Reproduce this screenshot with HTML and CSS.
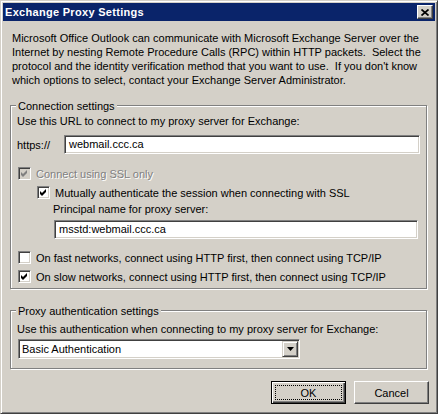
FILE: index.html
```html
<!DOCTYPE html>
<html>
<head>
    <title>Exchange Proxy Settings</title>
    <meta name="viewport" content="width=device-width, initial-scale=1">
    <link rel="stylesheet" href="styles.css">
</head>
<body>
<div class="window">
    <div class="titlebar">
        <span class="title">Exchange Proxy Settings</span>
        <span class="close-btn">
            <svg width="8" height="7" viewBox="0 0 8 7"><path d="M0.5 0.5L7.5 6.5M7.5 0.5L0.5 6.5" stroke="#000" stroke-width="1.7"/></svg>
        </span>
    </div>

    <div class="body">
        <p class="intro">Microsoft Office Outlook can communicate with Microsoft Exchange Server over the<br>Internet by nesting Remote Procedure Calls (RPC) within HTTP packets.&nbsp; Select the<br>protocol and the identity verification method that you want to use.&nbsp; If you don't know<br>which options to select, contact your Exchange Server Administrator.</p>

        <!-- connection -->
        <div class="group group-conn">
            <span class="legend">Connection settings</span>
            <div class="line">Use this URL to connect to my proxy server for Exchange:</div>
            <div class="url-row">
                <span class="prefix">https://</span>
                <div class="field">webmail.ccc.ca</div>
            </div>
            <div class="check disabled">
                <span class="box"><svg width="7" height="7" viewBox="0 0 7 7"><path d="M0 2L2 4L6 0V3L2 7L0 5Z"/></svg></span>
                Connect using SSL only
            </div>
            <div class="sub">
                <div class="check">
                    <span class="box"><svg width="7" height="7" viewBox="0 0 7 7"><path d="M0 2L2 4L6 0V3L2 7L0 5Z"/></svg></span>
                    Mutually authenticate the session when connecting with SSL
                </div>
                <div class="sub2">
                    <div class="line">Principal name for proxy server:</div>
                    <div class="field field-principal">msstd:webmail.ccc.ca</div>
                </div>
            </div>
            <div class="check check-fast">
                <span class="box"></span>
                On fast networks, connect using HTTP first, then connect using TCP/IP
            </div>
            <div class="check">
                <span class="box"><svg width="7" height="7" viewBox="0 0 7 7"><path d="M0 2L2 4L6 0V3L2 7L0 5Z"/></svg></span>
                On slow networks, connect using HTTP first, then connect using TCP/IP
            </div>
        </div>

        <!-- authentication -->
        <div class="group group-auth">
            <span class="legend">Proxy authentication settings</span>
            <div class="line">Use this authentication when connecting to my proxy server for Exchange:</div>
            <div class="combo">
                <span class="combo-text">Basic Authentication</span>
                <span class="combo-btn"><svg width="7" height="4" viewBox="0 0 7 4"><path d="M0 0H7L3.5 4Z"/></svg></span>
            </div>
        </div>

        <div class="buttons">
            <div class="btn btn-default"><span class="focus">OK</span></div>
            <div class="btn">Cancel</div>
        </div>
    </div>
</div>
</body>
</html>
```

FILE: styles.css
```css
body {
    margin: 0;
    font-family: "Liberation Sans", Arial, sans-serif;
    font-size: 11px;
    color: #000;
    background: #d4d0c8;
}

.window {
    width: 438px;
    height: 414px;
    box-sizing: border-box;
    background: #d4d0c8;
    border: 1px solid;
    border-color: #d4d0c8 #404040 #404040 #d4d0c8;
    box-shadow: inset 1px 1px 0 #fff, inset -1px -1px 0 #808080;
    padding: 2px;
    display: flex;
    flex-direction: column;
}

.titlebar {
    height: 18px;
    background: #0a246a;
    display: flex;
    align-items: center;
    padding-left: 2px;
}

.title {
    color: #fff;
    font-weight: bold;
    font-size: 11px;
    letter-spacing: 0.3px;
}

.close-btn {
    margin-left: auto;
    margin-right: 2px;
    width: 16px;
    height: 14px;
    box-sizing: border-box;
    background: #d4d0c8;
    border: 1px solid;
    border-color: #fff #404040 #404040 #fff;
    box-shadow: inset -1px -1px 0 #808080;
    display: flex;
    align-items: center;
    justify-content: center;
}

.body {
    padding: 0 8px 0 7px;
}

.intro {
    margin: 10px 0 0 2px;
    line-height: 14px;
}

.group {
    position: relative;
    border: 1px solid #808080;
    box-shadow: 1px 1px 0 #fff, inset 1px 1px 0 #fff;
    padding: 0 6px;
}

.legend {
    position: absolute;
    top: -7px;
    left: 5px;
    padding: 0 2px;
    line-height: 14px;
    background: #d4d0c8;
}

.line {
    line-height: 14px;
    white-space: nowrap;
}

.group-conn {
    margin-top: 18px;
    padding-top: 8px;
    padding-bottom: 2px;
}

.url-row {
    display: flex;
    align-items: center;
    margin-top: 7px;
}

.prefix {
    width: 47px;
}

.field {
    flex: 1;
    height: 19px;
    box-sizing: border-box;
    background: #fff;
    border: 1px solid;
    border-color: #808080 #fff #fff #808080;
    box-shadow: inset 1px 1px 0 #404040, inset -1px -1px 0 #d4d0c8;
    padding-left: 4px;
    line-height: 17px;
}

.field-principal {
    margin: 4px 2px 0 1px;
}

.check {
    height: 19px;
    display: flex;
    align-items: center;
    white-space: nowrap;
}

.url-row + .check {
    margin-top: 10px;
}

.box {
    width: 13px;
    height: 13px;
    box-sizing: border-box;
    margin: 0 5px 0 1px;
    background: #fff;
    border: 1px solid;
    border-color: #808080 #fff #fff #808080;
    box-shadow: inset 1px 1px 0 #404040, inset -1px -1px 0 #d4d0c8;
    display: flex;
    align-items: center;
    justify-content: center;
}

.box svg {
    fill: #000;
}

.disabled {
    color: #808080;
    text-shadow: 1px 1px 0 #fff;
}

.disabled .box {
    background: #d4d0c8;
}

.disabled .box svg {
    fill: #808080;
}

.sub {
    padding-left: 19px;
}

.sub2 {
    padding-left: 17px;
}

.check-fast {
    margin-top: 9px;
}

.group-auth {
    margin-top: 21px;
    padding-top: 11px;
    padding-bottom: 9px;
}

.combo {
    margin: 3px 0 0 1px;
    width: 282px;
    height: 20px;
    box-sizing: border-box;
    background: #fff;
    border: 1px solid;
    border-color: #808080 #fff #fff #808080;
    box-shadow: inset 1px 1px 0 #404040, inset -1px -1px 0 #d4d0c8;
    display: flex;
    align-items: center;
    padding: 0 1px 0 3px;
}

.combo-text {
    flex: 1;
}

.combo-btn {
    width: 16px;
    height: 16px;
    box-sizing: border-box;
    background: #d4d0c8;
    border: 1px solid;
    border-color: #d4d0c8 #404040 #404040 #d4d0c8;
    box-shadow: inset 1px 1px 0 #fff, inset -1px -1px 0 #808080;
    display: flex;
    align-items: center;
    justify-content: center;
}

.buttons {
    display: flex;
    justify-content: flex-end;
    gap: 8px;
    margin: 12px -2px 0 0;
}

.btn {
    width: 75px;
    height: 23px;
    box-sizing: border-box;
    border: 1px solid;
    border-color: #fff #404040 #404040 #fff;
    box-shadow: inset -1px -1px 0 #808080;
    display: flex;
    align-items: center;
    justify-content: center;
}

.btn-default {
    border: 1px solid #000;
    box-shadow: inset 1px 1px 0 #fff, inset -1px -1px 0 #404040, inset -2px -2px 0 #808080;
    padding: 3px;
}

.focus {
    flex: 1;
    align-self: stretch;
    border: 1px dotted #000;
    display: flex;
    align-items: center;
    justify-content: center;
}
```
